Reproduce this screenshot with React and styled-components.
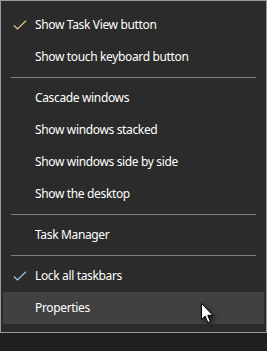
import React from 'react';
import styled, { createGlobalStyle } from 'styled-components';

const GlobalStyle = createGlobalStyle`
  html, body {
    margin: 0;
    padding: 0;
    background: #1f1f1f;
    width: 267px;
    height: 351px;
    overflow: hidden;
  }
`;

const Menu = styled.div`
  position: relative;
  box-sizing: border-box;
  width: 267px;
  padding: 8px 2px 8px;
  background: #2b2b2b;
  border: 1px solid #9b9b9b;
  font-family: "Noto Sans", "Open Sans", sans-serif;
  font-size: 12px;
  letter-spacing: -0.35px;
  color: #ffffff;
`;

const Item = styled.div`
  display: flex;
  align-items: center;
  height: 32px;
  background: ${({ $hover }) => ($hover ? '#414141' : 'transparent')};
`;

const CheckSlot = styled.div`
  width: 32px;
  height: 32px;
  display: flex;
  align-items: center;
  justify-content: center;
  padding-left: 2px;
  box-sizing: border-box;
`;

const Label = styled.span`
  white-space: nowrap;
  line-height: 32px;
`;

const Separator = styled.div`
  height: 9px;
  display: flex;
  align-items: center;
  padding: 0 8px;

  &::after {
    content: '';
    flex: 1;
    height: 1px;
    background: #7f7f7f;
  }
`;

const Cursor = styled.svg`
  position: absolute;
  left: 200px;
  top: 302px;
  filter: drop-shadow(2px 2px 2px rgba(0, 0, 0, 0.6));
`;

const Check = ({ tint }) => (
  <svg width="14" height="10" viewBox="0 0 14 10">
    <path d="M1 5.5 L4.5 9 L13 0.8" fill="none" stroke={tint} strokeWidth="1.2" />
  </svg>
);

const items = [
  { label: 'Show Task View button', check: '#e9c48a' },
  { label: 'Show touch keyboard button' },
  'sep',
  { label: 'Cascade windows' },
  { label: 'Show windows stacked' },
  { label: 'Show windows side by side' },
  { label: 'Show the desktop' },
  'sep',
  { label: 'Task Manager' },
  'sep',
  { label: 'Lock all taskbars', check: '#9cc4ec' },
  { label: 'Properties', hover: true },
];

export default function App() {
  return (
    <>
      <GlobalStyle />
      <Menu>
        {items.map((item, i) =>
          item === 'sep' ? (
            <Separator key={i} />
          ) : (
            <Item key={i} $hover={item.hover}>
              <CheckSlot>{item.check && <Check tint={item.check} />}</CheckSlot>
              <Label>{item.label}</Label>
            </Item>
          )
        )}
        <Cursor width="14" height="22" viewBox="0 0 14 22">
          <path
            d="M0.5 0.5 L0.5 16.5 L4.2 13 L6.8 19.5 L9.3 18.5 L6.8 12.3 L11.8 12.3 Z"
            fill="#ffffff"
            stroke="#000000"
            strokeWidth="1"
            strokeLinejoin="miter"
          />
        </Cursor>
      </Menu>
    </>
  );
}
